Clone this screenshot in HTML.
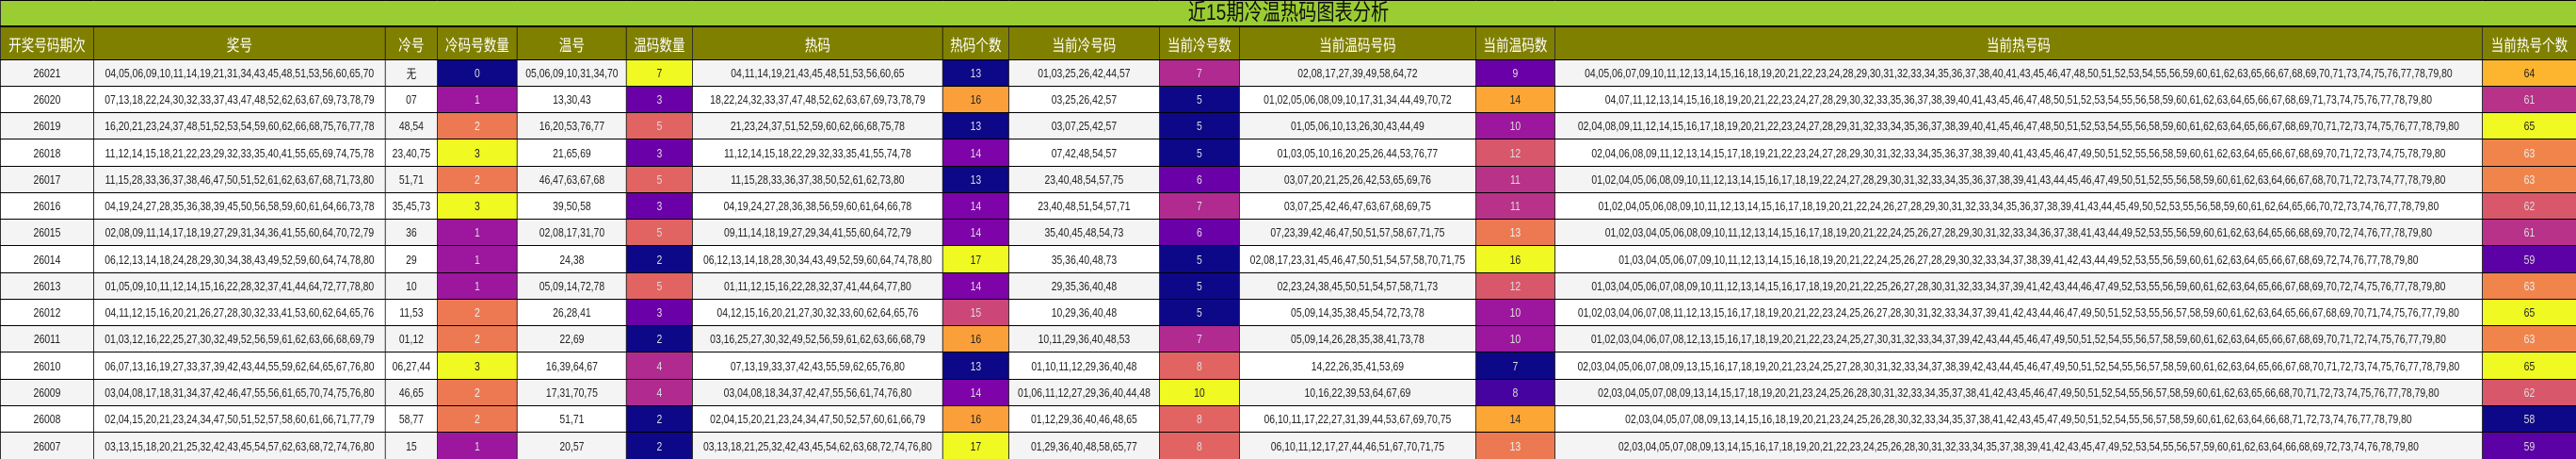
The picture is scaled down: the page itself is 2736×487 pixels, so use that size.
<!DOCTYPE html>
<html><head><meta charset="utf-8">
<style>
html,body{margin:0;padding:0;background:#fff;width:2736px;height:487px;overflow:hidden}
.wrap{transform:scaleX(0.8);transform-origin:0 0;width:3420px}
table{border-collapse:collapse;table-layout:fixed;width:3420px;font-family:"Liberation Sans","Noto Sans CJK SC",sans-serif;font-size:13px;color:#222}
td{border:1px solid #000;text-align:center;white-space:nowrap;padding:0;overflow:hidden}
tr.t td{background:#9acd32;height:26px;font-size:24px;line-height:26px;color:#111;border-bottom:2px solid #000}
tr.h td{background:#808000;color:#fff;height:34px;font-size:17px}
tr.r td{height:27px}
tr.r.x td{height:28px}
tr.g td{background:#f4f4f4}
tr td.a{background:#0d0887;color:#ddd}
tr td.b{background:#5c01a6;color:#ddd}
tr td.c{background:#6a00a8;color:#ddd}
tr td.p{background:#46039f;color:#ddd}
tr td.d{background:#7e03a8;color:#ddd}
tr td.e{background:#9c179e;color:#ddd}
tr td.f{background:#b12a90;color:#ddd}
tr td.gg{background:#b83289;color:#ddd}
tr td.hh{background:#cc4778;color:#ddd}
tr td.i{background:#d8576b;color:#ddd}
tr td.j{background:#e16462;color:#ddd}
tr td.k{background:#ed7953;color:#eee}
tr td.l{background:#f1844b;color:#eee}
tr td.m{background:#fb9f3a;color:#222}
tr td.n{background:#fca636;color:#222}
tr td.o{background:#fdb42f;color:#222}
tr td.y{background:#f0f921;color:#222}
</style></head><body><div class="wrap">
<table>
<colgroup><col style="width:123.75px"><col style="width:387.5px"><col style="width:68.75px"><col style="width:106.25px"><col style="width:145px"><col style="width:87.5px"><col style="width:332.5px"><col style="width:87.5px"><col style="width:200px"><col style="width:106.25px"><col style="width:313.75px"><col style="width:105px"><col style="width:1231.25px"><col style="width:125px"></colgroup>
<tr class="t"><td colspan="14">近15期冷温热码图表分析</td></tr>
<tr class="h"><td>开奖号码期次</td><td>奖号</td><td>冷号</td><td>冷码号数量</td><td>温号</td><td>温码数量</td><td>热码</td><td>热码个数</td><td>当前冷号码</td><td>当前冷号数</td><td>当前温码号码</td><td>当前温码数</td><td>当前热号码</td><td>当前热号个数</td></tr>
<tr class="r g"><td>26021</td><td>04,05,06,09,10,11,14,19,21,31,34,43,45,48,51,53,56,60,65,70</td><td>无</td><td class="a">0</td><td>05,06,09,10,31,34,70</td><td class="y">7</td><td>04,11,14,19,21,43,45,48,51,53,56,60,65</td><td class="a">13</td><td>01,03,25,26,42,44,57</td><td class="f">7</td><td>02,08,17,27,39,49,58,64,72</td><td class="c">9</td><td>04,05,06,07,09,10,11,12,13,14,15,16,18,19,20,21,22,23,24,28,29,30,31,32,33,34,35,36,37,38,40,41,43,45,46,47,48,50,51,52,53,54,55,56,59,60,61,62,63,65,66,67,68,69,70,71,73,74,75,76,77,78,79,80</td><td class="o">64</td></tr>
<tr class="r"><td>26020</td><td>07,13,18,22,24,30,32,33,37,43,47,48,52,62,63,67,69,73,78,79</td><td>07</td><td class="e">1</td><td>13,30,43</td><td class="c">3</td><td>18,22,24,32,33,37,47,48,52,62,63,67,69,73,78,79</td><td class="m">16</td><td>03,25,26,42,57</td><td class="a">5</td><td>01,02,05,06,08,09,10,17,31,34,44,49,70,72</td><td class="n">14</td><td>04,07,11,12,13,14,15,16,18,19,20,21,22,23,24,27,28,29,30,32,33,35,36,37,38,39,40,41,43,45,46,47,48,50,51,52,53,54,55,56,58,59,60,61,62,63,64,65,66,67,68,69,71,73,74,75,76,77,78,79,80</td><td class="gg">61</td></tr>
<tr class="r g"><td>26019</td><td>16,20,21,23,24,37,48,51,52,53,54,59,60,62,66,68,75,76,77,78</td><td>48,54</td><td class="k">2</td><td>16,20,53,76,77</td><td class="j">5</td><td>21,23,24,37,51,52,59,60,62,66,68,75,78</td><td class="a">13</td><td>03,07,25,42,57</td><td class="a">5</td><td>01,05,06,10,13,26,30,43,44,49</td><td class="e">10</td><td>02,04,08,09,11,12,14,15,16,17,18,19,20,21,22,23,24,27,28,29,31,32,33,34,35,36,37,38,39,40,41,45,46,47,48,50,51,52,53,54,55,56,58,59,60,61,62,63,64,65,66,67,68,69,70,71,72,73,74,75,76,77,78,79,80</td><td class="y">65</td></tr>
<tr class="r x"><td>26018</td><td>11,12,14,15,18,21,22,23,29,32,33,35,40,41,55,65,69,74,75,78</td><td>23,40,75</td><td class="y">3</td><td>21,65,69</td><td class="c">3</td><td>11,12,14,15,18,22,29,32,33,35,41,55,74,78</td><td class="d">14</td><td>07,42,48,54,57</td><td class="a">5</td><td>01,03,05,10,16,20,25,26,44,53,76,77</td><td class="i">12</td><td>02,04,06,08,09,11,12,13,14,15,17,18,19,21,22,23,24,27,28,29,30,31,32,33,34,35,36,37,38,39,40,41,43,45,46,47,49,50,51,52,55,56,58,59,60,61,62,63,64,65,66,67,68,69,70,71,72,73,74,75,78,79,80</td><td class="l">63</td></tr>
<tr class="r g"><td>26017</td><td>11,15,28,33,36,37,38,46,47,50,51,52,61,62,63,67,68,71,73,80</td><td>51,71</td><td class="k">2</td><td>46,47,63,67,68</td><td class="j">5</td><td>11,15,28,33,36,37,38,50,52,61,62,73,80</td><td class="a">13</td><td>23,40,48,54,57,75</td><td class="c">6</td><td>03,07,20,21,25,26,42,53,65,69,76</td><td class="gg">11</td><td>01,02,04,05,06,08,09,10,11,12,13,14,15,16,17,18,19,22,24,27,28,29,30,31,32,33,34,35,36,37,38,39,41,43,44,45,46,47,49,50,51,52,55,56,58,59,60,61,62,63,64,66,67,68,70,71,72,73,74,77,78,79,80</td><td class="l">63</td></tr>
<tr class="r"><td>26016</td><td>04,19,24,27,28,35,36,38,39,45,50,56,58,59,60,61,64,66,73,78</td><td>35,45,73</td><td class="y">3</td><td>39,50,58</td><td class="c">3</td><td>04,19,24,27,28,36,38,56,59,60,61,64,66,78</td><td class="d">14</td><td>23,40,48,51,54,57,71</td><td class="f">7</td><td>03,07,25,42,46,47,63,67,68,69,75</td><td class="gg">11</td><td>01,02,04,05,06,08,09,10,11,12,13,14,15,16,17,18,19,20,21,22,24,26,27,28,29,30,31,32,33,34,35,36,37,38,39,41,43,44,45,49,50,52,53,55,56,58,59,60,61,62,64,65,66,70,72,73,74,76,77,78,79,80</td><td class="i">62</td></tr>
<tr class="r g"><td>26015</td><td>02,08,09,11,14,17,18,19,27,29,31,34,36,41,55,60,64,70,72,79</td><td>36</td><td class="e">1</td><td>02,08,17,31,70</td><td class="j">5</td><td>09,11,14,18,19,27,29,34,41,55,60,64,72,79</td><td class="d">14</td><td>35,40,45,48,54,73</td><td class="c">6</td><td>07,23,39,42,46,47,50,51,57,58,67,71,75</td><td class="k">13</td><td>01,02,03,04,05,06,08,09,10,11,12,13,14,15,16,17,18,19,20,21,22,24,25,26,27,28,29,30,31,32,33,34,36,37,38,41,43,44,49,52,53,55,56,59,60,61,62,63,64,65,66,68,69,70,72,74,76,77,78,79,80</td><td class="gg">61</td></tr>
<tr class="r x"><td>26014</td><td>06,12,13,14,18,24,28,29,30,34,38,43,49,52,59,60,64,74,78,80</td><td>29</td><td class="e">1</td><td>24,38</td><td class="a">2</td><td>06,12,13,14,18,28,30,34,43,49,52,59,60,64,74,78,80</td><td class="y">17</td><td>35,36,40,48,73</td><td class="a">5</td><td>02,08,17,23,31,45,46,47,50,51,54,57,58,70,71,75</td><td class="y">16</td><td>01,03,04,05,06,07,09,10,11,12,13,14,15,16,18,19,20,21,22,24,25,26,27,28,29,30,32,33,34,37,38,39,41,42,43,44,49,52,53,55,56,59,60,61,62,63,64,65,66,67,68,69,72,74,76,77,78,79,80</td><td class="b">59</td></tr>
<tr class="r g"><td>26013</td><td>01,05,09,10,11,12,14,15,16,22,28,32,37,41,44,64,72,77,78,80</td><td>10</td><td class="e">1</td><td>05,09,14,72,78</td><td class="j">5</td><td>01,11,12,15,16,22,28,32,37,41,44,64,77,80</td><td class="d">14</td><td>29,35,36,40,48</td><td class="a">5</td><td>02,23,24,38,45,50,51,54,57,58,71,73</td><td class="i">12</td><td>01,03,04,05,06,07,08,09,10,11,12,13,14,15,16,17,18,19,20,21,22,25,26,27,28,30,31,32,33,34,37,39,41,42,43,44,46,47,49,52,53,55,56,59,60,61,62,63,64,65,66,67,68,69,70,72,74,75,76,77,78,79,80</td><td class="l">63</td></tr>
<tr class="r"><td>26012</td><td>04,11,12,15,16,20,21,26,27,28,30,32,33,41,53,60,62,64,65,76</td><td>11,53</td><td class="k">2</td><td>26,28,41</td><td class="c">3</td><td>04,12,15,16,20,21,27,30,32,33,60,62,64,65,76</td><td class="hh">15</td><td>10,29,36,40,48</td><td class="a">5</td><td>05,09,14,35,38,45,54,72,73,78</td><td class="e">10</td><td>01,02,03,04,06,07,08,11,12,13,15,16,17,18,19,20,21,22,23,24,25,26,27,28,30,31,32,33,34,37,39,41,42,43,44,46,47,49,50,51,52,53,55,56,57,58,59,60,61,62,63,64,65,66,67,68,69,70,71,74,75,76,77,79,80</td><td class="y">65</td></tr>
<tr class="r g"><td>26011</td><td>01,03,12,16,22,25,27,30,32,49,52,56,59,61,62,63,66,68,69,79</td><td>01,12</td><td class="k">2</td><td>22,69</td><td class="a">2</td><td>03,16,25,27,30,32,49,52,56,59,61,62,63,66,68,79</td><td class="m">16</td><td>10,11,29,36,40,48,53</td><td class="f">7</td><td>05,09,14,26,28,35,38,41,73,78</td><td class="e">10</td><td>01,02,03,04,06,07,08,12,13,15,16,17,18,19,20,21,22,23,24,25,27,30,31,32,33,34,37,39,42,43,44,45,46,47,49,50,51,52,54,55,56,57,58,59,60,61,62,63,64,65,66,67,68,69,70,71,72,74,75,76,77,79,80</td><td class="l">63</td></tr>
<tr class="r x"><td>26010</td><td>06,07,13,16,19,27,33,37,39,42,43,44,55,59,62,64,65,67,76,80</td><td>06,27,44</td><td class="y">3</td><td>16,39,64,67</td><td class="f">4</td><td>07,13,19,33,37,42,43,55,59,62,65,76,80</td><td class="a">13</td><td>01,10,11,12,29,36,40,48</td><td class="j">8</td><td>14,22,26,35,41,53,69</td><td class="a">7</td><td>02,03,04,05,06,07,08,09,13,15,16,17,18,19,20,21,23,24,25,27,28,30,31,32,33,34,37,38,39,42,43,44,45,46,47,49,50,51,52,54,55,56,57,58,59,60,61,62,63,64,65,66,67,68,70,71,72,73,74,75,76,77,78,79,80</td><td class="y">65</td></tr>
<tr class="r g"><td>26009</td><td>03,04,08,17,18,31,34,37,42,46,47,55,56,61,65,70,74,75,76,80</td><td>46,65</td><td class="k">2</td><td>17,31,70,75</td><td class="f">4</td><td>03,04,08,18,34,37,42,47,55,56,61,74,76,80</td><td class="d">14</td><td>01,06,11,12,27,29,36,40,44,48</td><td class="y">10</td><td>10,16,22,39,53,64,67,69</td><td class="p">8</td><td>02,03,04,05,07,08,09,13,14,15,17,18,19,20,21,23,24,25,26,28,30,31,32,33,34,35,37,38,41,42,43,45,46,47,49,50,51,52,54,55,56,57,58,59,60,61,62,63,65,66,68,70,71,72,73,74,75,76,77,78,79,80</td><td class="i">62</td></tr>
<tr class="r"><td>26008</td><td>02,04,15,20,21,23,24,34,47,50,51,52,57,58,60,61,66,71,77,79</td><td>58,77</td><td class="k">2</td><td>51,71</td><td class="a">2</td><td>02,04,15,20,21,23,24,34,47,50,52,57,60,61,66,79</td><td class="m">16</td><td>01,12,29,36,40,46,48,65</td><td class="j">8</td><td>06,10,11,17,22,27,31,39,44,53,67,69,70,75</td><td class="n">14</td><td>02,03,04,05,07,08,09,13,14,15,16,18,19,20,21,23,24,25,26,28,30,32,33,34,35,37,38,41,42,43,45,47,49,50,51,52,54,55,56,57,58,59,60,61,62,63,64,66,68,71,72,73,74,76,77,78,79,80</td><td class="a">58</td></tr>
<tr class="r g x"><td>26007</td><td>03,13,15,18,20,21,25,32,42,43,45,54,57,62,63,68,72,74,76,80</td><td>15</td><td class="e">1</td><td>20,57</td><td class="a">2</td><td>03,13,18,21,25,32,42,43,45,54,62,63,68,72,74,76,80</td><td class="y">17</td><td>01,29,36,40,48,58,65,77</td><td class="j">8</td><td>06,10,11,12,17,27,44,46,51,67,70,71,75</td><td class="k">13</td><td>02,03,04,05,07,08,09,13,14,15,16,17,18,19,20,21,22,23,24,25,26,28,30,31,32,33,34,35,37,38,39,41,42,43,45,47,49,52,53,54,55,56,57,59,60,61,62,63,64,66,68,69,72,73,74,76,78,79,80</td><td class="b">59</td></tr>
</table></div></body></html>
